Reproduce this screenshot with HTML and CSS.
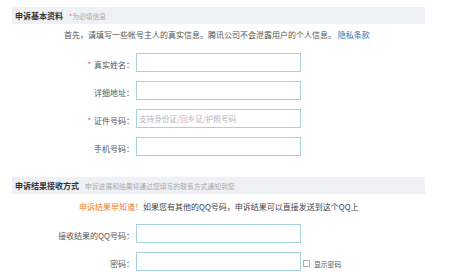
FILE: index.html
```html
<!DOCTYPE html>
<html lang="zh-CN">
<head>
<meta charset="utf-8">
<title>申诉</title>
<link rel="stylesheet" href="styles.css">
</head>
<body>
<div class="page">
  <div class="section-head">
    <span class="title">申诉基本资料</span>
    <span class="sub"><span class="star">*</span>为必填信息</span>
  </div>
  <div class="intro">首先，请填写一些帐号主人的真实信息。腾讯公司不会泄露用户的个人信息。 <a class="link" href="#">隐私条款</a></div>
  <div class="form form1">
    <div class="row">
      <label class="label"><span class="star">*</span> 真实姓名：</label>
      <div class="input"></div>
    </div>
    <div class="row">
      <label class="label">详细地址：</label>
      <div class="input"></div>
    </div>
    <div class="row">
      <label class="label"><span class="star">*</span> 证件号码：</label>
      <div class="input"><span class="ph">支持身份证/回乡证/护照号码</span></div>
    </div>
    <div class="row">
      <label class="label">手机号码：</label>
      <div class="input"></div>
    </div>
  </div>

  <div class="section-head head2">
    <span class="title">申诉结果接收方式</span>
    <span class="sub">申诉进展和结果将通过您填写的联系方式通知到您</span>
  </div>
  <div class="notice"><span class="orange">申诉结果早知道！</span>如果您有其他的QQ号码，申诉结果可以直接发送到这个QQ上</div>
  <div class="form form2">
    <div class="row">
      <label class="label">接收结果的QQ号码：</label>
      <div class="input"></div>
    </div>
    <div class="row">
      <label class="label">密码：</label>
      <div class="input"></div>
      <span class="check"></span>
      <span class="check-text">显示密码</span>
    </div>
  </div>
</div>
</body>
</html>
```

FILE: styles.css
```css
html, body {
  margin: 0;
  padding: 0;
  background: #ffffff;
}
body {
  font-family: "Noto Sans CJK SC", "Noto Sans", sans-serif;
  color: #444;
  font-size: 8px;
}
.page {
  width: 413px;
  padding: 7px 0 0 12px;
}
.section-head {
  height: 17px;
  background: #eef1f5;
  display: flex;
  align-items: center;
  padding-left: 3px;
}
.title {
  font-size: 8px;
  font-weight: bold;
  color: #333;
}
.sub {
  font-size: 6.8px;
  color: #a8a8a8;
  margin-left: 6px;
}
.star {
  color: #e84c4c;
}
.intro {
  margin-top: 5px;
  height: 12px;
  line-height: 12px;
  padding-left: 52px;
  color: #555;
  white-space: nowrap;
}
.link {
  color: #3a6ea5;
  text-decoration: none;
}
.form {
  display: flex;
  flex-direction: column;
  gap: 9px;
}
.form1 {
  margin-top: 12px;
}
.row {
  display: flex;
  align-items: center;
  height: 19px;
}
.label {
  width: 122px;
  text-align: right;
  color: #555;
  white-space: nowrap;
  padding-top: 3px;
}
.label .star {
  margin-right: 1px;
}
.input {
  margin-left: 2px;
  width: 161px;
  height: 17px;
  border: 1px solid #a6d3d6;
  display: flex;
  align-items: center;
  padding-left: 2px;
  box-sizing: content-box;
}
.ph {
  color: #b5b5b5;
  font-size: 7.6px;
}
.head2 {
  margin-top: 21px;
}
.notice {
  margin-top: 7px;
  height: 12px;
  line-height: 12px;
  padding-left: 67px;
  color: #444;
  white-space: nowrap;
}
.orange {
  color: #f07a22;
}
.form2 {
  margin-top: 11px;
}
.check {
  width: 5px;
  height: 5px;
  border: 1px solid #b0b0b0;
  margin-left: 2px;
  margin-top: 3px;
}
.check-text {
  font-size: 6.8px;
  color: #555;
  margin-left: 4px;
  padding-top: 5px;
}
```
